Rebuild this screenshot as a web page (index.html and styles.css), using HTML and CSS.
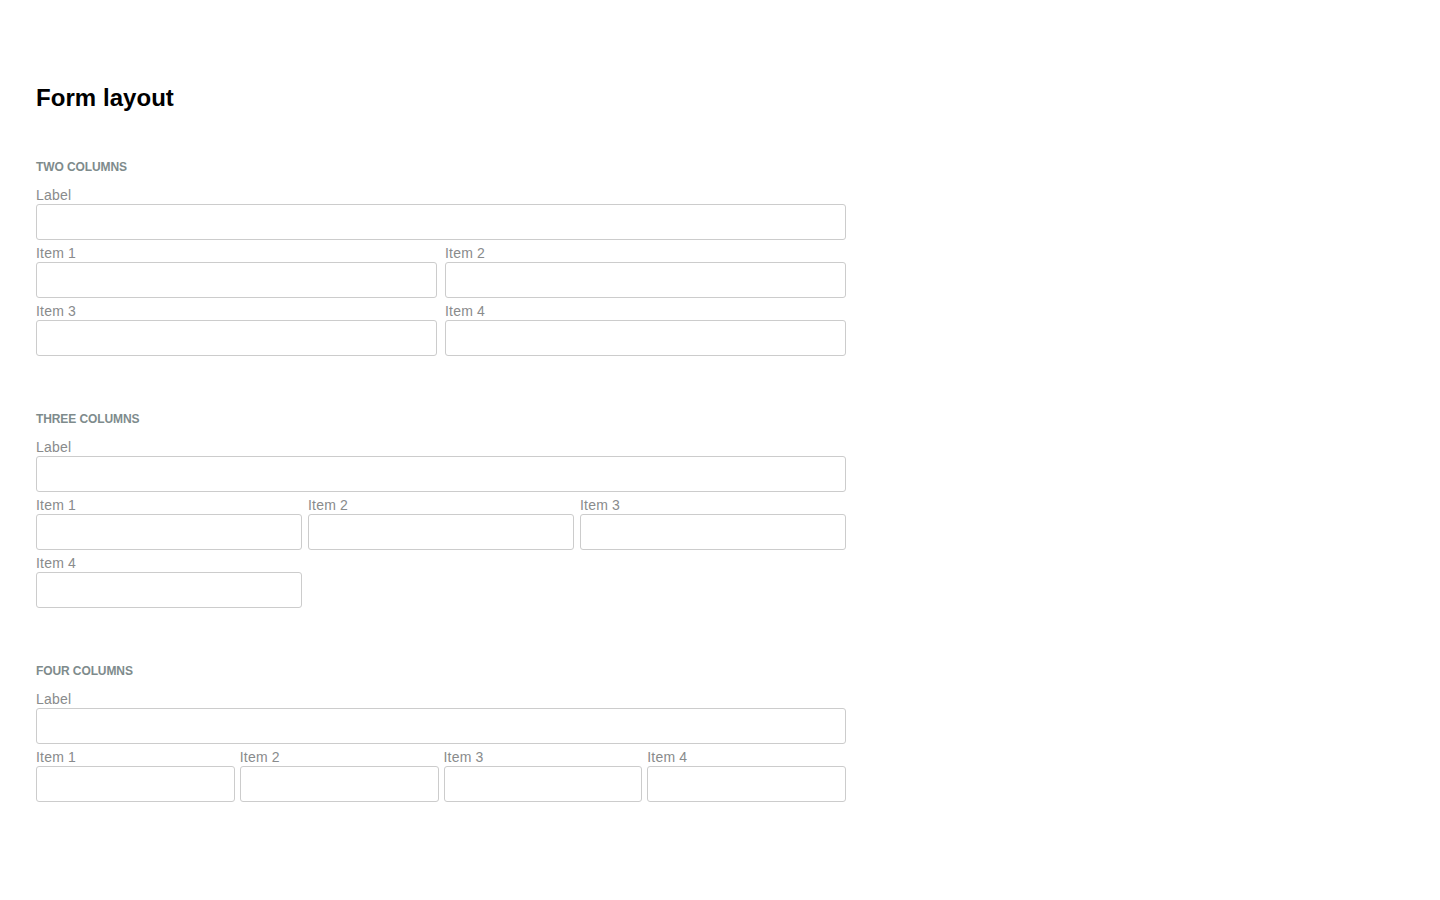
FILE: index.html
```html
<!DOCTYPE html>
<html>
<head>
<meta charset="utf-8">
<title>Form layout</title>
<link rel="stylesheet" href="styles.css">
</head>
<body>
<main class="page">
  <h1 class="title">Form layout</h1>

  <section class="section">
    <h2 class="section-title">TWO COLUMNS</h2>
    <div class="field">
      <label class="label">Label</label>
      <input class="input" type="text">
    </div>
    <div class="grid grid-2">
      <div class="field"><label class="label">Item 1</label><input class="input" type="text"></div>
      <div class="field"><label class="label">Item 2</label><input class="input" type="text"></div>
      <div class="field"><label class="label">Item 3</label><input class="input" type="text"></div>
      <div class="field"><label class="label">Item 4</label><input class="input" type="text"></div>
    </div>
  </section>

  <section class="section">
    <h2 class="section-title">THREE COLUMNS</h2>
    <div class="field">
      <label class="label">Label</label>
      <input class="input" type="text">
    </div>
    <div class="grid grid-3">
      <div class="field"><label class="label">Item 1</label><input class="input" type="text"></div>
      <div class="field"><label class="label">Item 2</label><input class="input" type="text"></div>
      <div class="field"><label class="label">Item 3</label><input class="input" type="text"></div>
      <div class="field"><label class="label">Item 4</label><input class="input" type="text"></div>
    </div>
  </section>

  <section class="section">
    <h2 class="section-title">FOUR COLUMNS</h2>
    <div class="field">
      <label class="label">Label</label>
      <input class="input" type="text">
    </div>
    <div class="grid grid-4">
      <div class="field"><label class="label">Item 1</label><input class="input" type="text"></div>
      <div class="field"><label class="label">Item 2</label><input class="input" type="text"></div>
      <div class="field"><label class="label">Item 3</label><input class="input" type="text"></div>
      <div class="field"><label class="label">Item 4</label><input class="input" type="text"></div>
    </div>
  </section>
</main>
</body>
</html>
```
FILE: styles.css
```css
* { box-sizing: border-box; }
html, body { margin: 0; padding: 0; background: #fff; }
body {
  font-family: "Liberation Sans", Arial, sans-serif;
  color: #000;
}
.page {
  width: 882px;
  padding: 84px 36px 36px 36px;
}
.title {
  margin: 0 0 47px 0;
  font-size: 24px;
  line-height: 28px;
  font-weight: bold;
  letter-spacing: 0.05px;
}
.section {
  margin: 0 0 51px 0;
}
.section-title {
  margin: 0 0 11px 0;
  font-size: 12px;
  line-height: 16px;
  font-weight: bold;
  color: #7e8b8c;
  letter-spacing: -0.1px;
}
.field {
  display: flex;
  flex-direction: column;
  margin-bottom: 4px;
  min-width: 0;
}
.label {
  font-size: 14px;
  line-height: 18px;
  color: #898b8c;
  letter-spacing: 0.2px;
}
.input {
  display: block;
  width: 100%;
  height: 36px;
  margin: 0;
  padding: 0 8px;
  border: 1px solid #cccccc;
  border-radius: 3px;
  background: #fff;
  font: inherit;
  outline: none;
}
.grid { display: grid; }
.grid-2 { grid-template-columns: repeat(2, 1fr); column-gap: 8px; }
.grid-3 { grid-template-columns: repeat(3, 1fr); column-gap: 6px; }
.grid-4 { grid-template-columns: repeat(4, 1fr); column-gap: 5px; }
```
